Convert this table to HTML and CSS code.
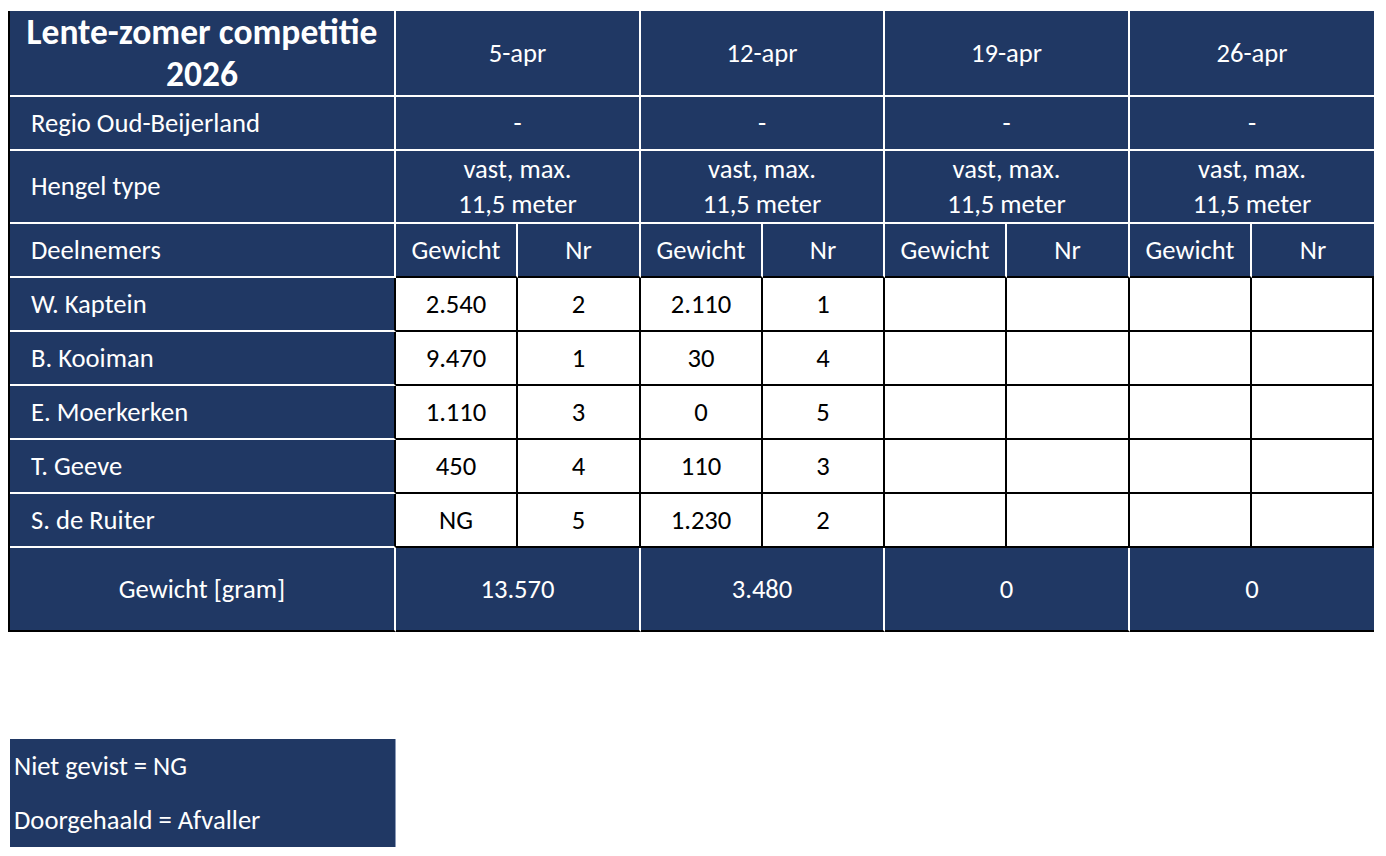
FILE: index.html
```html
<!DOCTYPE html>
<html lang="nl">
<head>
<meta charset="utf-8">
<title>Lente-zomer competitie 2026</title>
<link rel="stylesheet" href="styles.css">
</head>
<body>
<table class="comp">
  <colgroup>
    <col class="c-name">
    <col class="c-a"><col class="c-b">
    <col class="c-a"><col class="c-a">
    <col class="c-a"><col class="c-b">
    <col class="c-a"><col class="c-a">
  </colgroup>
  <tr class="r-title">
    <th class="title">Lente-zomer competitie<br>2026</th>
    <th colspan="2">5-apr</th>
    <th colspan="2">12-apr</th>
    <th colspan="2">19-apr</th>
    <th colspan="2" class="last">26-apr</th>
  </tr>
  <tr class="r-regio">
    <th class="lbl">Regio Oud-Beijerland</th>
    <th colspan="2">-</th>
    <th colspan="2">-</th>
    <th colspan="2">-</th>
    <th colspan="2" class="last">-</th>
  </tr>
  <tr class="r-type">
    <th class="lbl">Hengel type</th>
    <th colspan="2">vast, max.<br>11,5 meter</th>
    <th colspan="2">vast, max.<br>11,5 meter</th>
    <th colspan="2">vast, max.<br>11,5 meter</th>
    <th colspan="2" class="last">vast, max.<br>11,5 meter</th>
  </tr>
  <tr class="r-sub">
    <th class="lbl">Deelnemers</th>
    <th>Gewicht</th><th>Nr</th>
    <th>Gewicht</th><th>Nr</th>
    <th>Gewicht</th><th>Nr</th>
    <th>Gewicht</th><th class="last">Nr</th>
  </tr>
  <tr class="r-data">
    <th class="lbl">W. Kaptein</th>
    <td>2.540</td><td>2</td><td>2.110</td><td>1</td><td></td><td></td><td></td><td></td>
  </tr>
  <tr class="r-data">
    <th class="lbl">B. Kooiman</th>
    <td>9.470</td><td>1</td><td>30</td><td>4</td><td></td><td></td><td></td><td></td>
  </tr>
  <tr class="r-data">
    <th class="lbl">E. Moerkerken</th>
    <td>1.110</td><td>3</td><td>0</td><td>5</td><td></td><td></td><td></td><td></td>
  </tr>
  <tr class="r-data">
    <th class="lbl">T. Geeve</th>
    <td>450</td><td>4</td><td>110</td><td>3</td><td></td><td></td><td></td><td></td>
  </tr>
  <tr class="r-data">
    <th class="lbl">S. de Ruiter</th>
    <td>NG</td><td>5</td><td>1.230</td><td>2</td><td></td><td></td><td></td><td></td>
  </tr>
  <tr class="r-total">
    <th class="tot">Gewicht [gram]</th>
    <th colspan="2">13.570</th>
    <th colspan="2">3.480</th>
    <th colspan="2">0</th>
    <th colspan="2" class="last">0</th>
  </tr>
</table>

<div class="legend">
  <div class="legend-row">Niet gevist = NG</div>
  <div class="legend-row">Doorgehaald = Afvaller</div>
</div>
</body>
</html>
```

FILE: styles.css
```css
html, body {
  margin: 0;
  padding: 0;
  background: #ffffff;
}

body {
  font-family: "Carlito", "Open Sans", "Liberation Sans", sans-serif;
  font-size: 26.6px;
  color: #000;
}

.comp {
  margin: 11px 0 0 8px;
  border-collapse: separate;
  border-spacing: 0;
  table-layout: fixed;
  width: 1366px;
  border-left: 2px solid #000;
}

.c-name { width: 386px; }
.c-a { width: 122px; }
.c-b { width: 123px; }

.comp th,
.comp td {
  padding: 0;
  text-align: center;
  vertical-align: middle;
  font-weight: normal;
  line-height: 35px;
  white-space: nowrap;
}

.comp th {
  background: #203864;
  color: #ffffff;
  border-right: 2px solid #ffffff;
  border-bottom: 2px solid #ffffff;
}

.comp th.last {
  border-right: none;
}

.comp th.lbl {
  text-align: left;
  padding-left: 21px;
}

.comp th.title {
  font-weight: bold;
  font-size: 35.5px;
  line-height: 42px;
}

.r-title th { height: 84px; }
.r-regio th { height: 52px; }
.r-type th { height: 71px; }
.r-sub th { height: 52px; }
.r-data th, .r-data td { height: 52px; }
.r-total th { height: 82px; }

.r-sub th:not(.lbl) {
  border-bottom: 2px solid #000;
}

.r-data th.lbl {
  border-right: 2px solid #000;
}

.comp td {
  background: #ffffff;
  color: #000;
  border-right: 2px solid #000;
  border-bottom: 2px solid #000;
}

.r-total th {
  border-bottom: 2px solid #000;
}

.legend {
  margin: 107px 0 0 10px;
  width: 385px;
  background: #203864;
  color: #ffffff;
  border-right: 1px solid #8a9ab8;
}

.legend-row {
  height: 54px;
  line-height: 54px;
  padding-left: 4px;
}
```
